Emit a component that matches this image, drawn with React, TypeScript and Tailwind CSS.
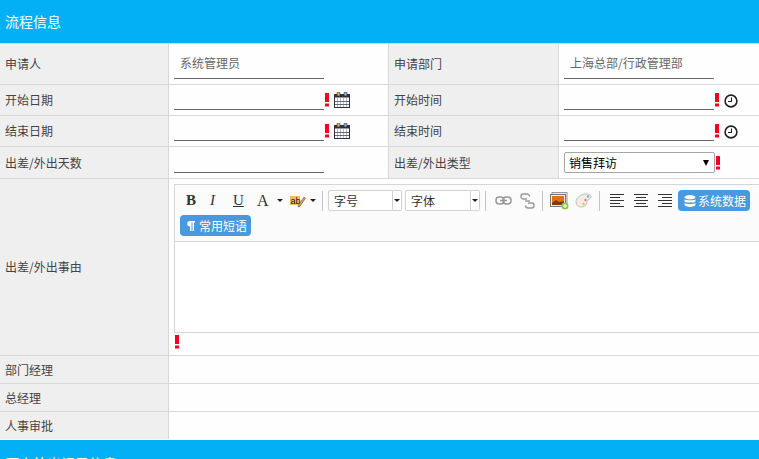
import type { ReactNode } from 'react'

const FONT = "[font-family:'Microsoft_YaHei','Noto_Sans_CJK_SC','Liberation_Sans',sans-serif]"

function Label({ children, className = '' }: { children: ReactNode; className?: string }) {
  return <div className={`flex items-center bg-[#f0efef] pl-[5px] text-[12px] text-[#444] ${className}`}>{children}</div>
}

function Bang() {
  return (
    <svg width="5" height="14" viewBox="0 0 5 14" className="block shrink-0">
      <rect x="1" y="0" width="4" height="9" fill="#f5001e" />
      <rect x="1" y="10.500" width="4" height="3" fill="#f5001e" />
    </svg>
  )
}

function Calendar() {
  return (
    <svg width="16" height="16" viewBox="0 0 16 16" className="ml-[5px] mt-[2px] shrink-0">
      <rect x="0.5" y="2.5" width="15" height="13" fill="#fff" stroke="#33303a" />
      <rect x="0.5" y="2.5" width="15" height="3" fill="#33303a" />
      <path d="M3.5 6v9M6.5 6v9M9.5 6v9M12.5 6v9" stroke="#9fc4dc" />
      <path d="M1 9.5h14M1 12.5h14" stroke="#6b6870" />
      <rect x="3" y="0" width="3" height="4" rx="1" fill="#d9a860" stroke="#33303a" strokeWidth="0.6" />
      <rect x="10" y="0" width="3" height="4" rx="1" fill="#7fb0cf" stroke="#33303a" strokeWidth="0.6" />
    </svg>
  )
}

function Clock() {
  return (
    <svg width="14" height="14" viewBox="0 0 14 14" className="ml-[5px] mt-[4px] shrink-0">
      <circle cx="7" cy="7" r="5.9" fill="#fff" stroke="#222" strokeWidth="1.6" />
      <path d="M7.5 3.5V7.5H4" fill="none" stroke="#222" strokeWidth="1.1" />
    </svg>
  )
}

function Line({ text }: { text?: string }) {
  return <div className="h-[22px] w-[150px] shrink-0 border-b border-[#666] pl-[6px] text-[12px] leading-[12px] text-[#666]">{text}</div>
}

// value cell: the underline sits 5px above the row's bottom
function Value({ children }: { children?: ReactNode }) {
  return <div className="flex items-end bg-[#fefefe] pb-[5px] pl-[5px]">{children}</div>
}

function Required({ children }: { children: ReactNode }) {
  return (
    <div className="flex items-center">
      <Line />
      <span className="mt-[2px]"><Bang /></span>
      {children}
    </div>
  )
}

function Caret({ className = '' }: { className?: string }) {
  return <span className={`h-0 w-0 border-x-[3px] border-t-[3px] border-x-transparent border-t-[#222] ${className}`} />
}

function Sep({ className = '' }: { className?: string }) {
  return <span className={`h-[20px] w-px bg-[#c4c4c4] ${className}`} />
}

function Combo({ text, className = '' }: { text: string; className?: string }) {
  return (
    <span className={`flex h-[21px] ${className}`}>
      <span className="flex w-[65px] items-center rounded-l-[2px] border border-[#d2d2d2] bg-white pl-[5px] text-[12px] text-[#333]">{text}</span>
      <span className="flex w-[9px] items-center justify-center rounded-r-[2px] border border-l-0 border-[#d2d2d2] bg-white">
        <Caret />
      </span>
    </span>
  )
}

function PillButton({ icon, text, className = '' }: { icon: ReactNode; text: string; className?: string }) {
  return (
    <span className={`flex h-[21px] items-center rounded-[4px] bg-[#4a98dd] pl-[6px] text-[12px] text-white ${className}`}>
      {icon}
      {text}
    </span>
  )
}

function AlignIcon({ type, className = '' }: { type: 'left' | 'center' | 'right'; className?: string }) {
  const short = type === 'left' ? 'M0 3.5h10M0 9.5h10' : type === 'center' ? 'M2 3.5h10M2 9.5h10' : 'M4 3.5h10M4 9.5h10'
  return (
    <svg width="14" height="13" viewBox="0 0 14 13" className={`shrink-0 ${className}`} stroke="#333" fill="none">
      <path d="M0 0.5h14M0 6.5h14M0 12.5h14" />
      <path d={short} />
    </svg>
  )
}

function Toolbar() {
  return (
    <div className="flex h-[57px] flex-col gap-[4px] border-b border-[#d5d5d5] bg-[#fbfbfb] pt-[5px] shadow-[0_1px_2px_#ddd]">
      <div className="flex h-[21px] items-center pl-[11px]">
        <span className="flex items-center text-[15px] text-[#333] [font-family:'Liberation_Serif',serif]">
          <b className="w-[23px]">B</b>
          <i className="w-[24px] pl-[1px]">I</i>
          <u className="w-[24px]">U</u>
          <span className="w-[13px] text-[16px]">A</span>
        </span>
        <Caret className="ml-[7px]" />
        <svg width="16" height="14" viewBox="0 0 16 14" className="ml-[7px]">
          <rect x="0" y="2" width="10" height="9" fill="#f1bd55" />
          <text x="0.5" y="9.5" fontSize="9" fill="#222" fontFamily="Liberation Sans">ab</text>
          <path d="M8 12 14 3l1.500 1.200-5.500 8-2 .8z" fill="#e8a33d" stroke="#555" strokeWidth="0.6" />
        </svg>
        <Caret className="ml-[4px]" />
        <Sep className="ml-[6px]" />
        <Combo text="字号" className="ml-[5px]" />
        <Combo text="字体" className="ml-[3px] [&>span:first-child]:w-[66px]" />
        <Sep className="ml-[5px]" />
        <svg width="17" height="9" viewBox="0 0 17 9" className="ml-[9px]" fill="none" stroke="#999" strokeWidth="1.5">
          <rect x="1" y="1" width="8" height="7" rx="3.2" />
          <rect x="8" y="1" width="8" height="7" rx="3.2" />
          <path d="M5 4.500h7" />
        </svg>
        <svg width="15" height="16" viewBox="0 0 15 16" className="ml-[8px]" fill="none" stroke="#999" strokeWidth="1.4">
          <path d="M7 6H3.500a2.500 2.500 0 0 1 0-5H7a2.500 2.500 0 0 1 2.500 2.500" />
          <path d="M8 10h3.500a2.500 2.500 0 0 1 0 5H8a2.500 2.500 0 0 1-2.500-2.500" />
          <path d="M5 8h5" />
        </svg>
        <Sep className="ml-[7px]" />
        <svg width="19" height="18" viewBox="0 0 19 18" className="ml-[7px]">
          <rect x="2" y="0.5" width="15" height="12" fill="#e8e8e8" stroke="#999" />
          <rect x="0.5" y="2.5" width="15" height="12" fill="#eee" stroke="#777" />
          <rect x="2" y="4" width="12" height="9" fill="#d9741c" />
          <path d="M2 11l4-3 3 2 5-1v4H2z" fill="#7a3f10" />
          <circle cx="15" cy="14" r="3.500" fill="#8fc73e" />
          <path d="M15 12v4M13 14h4" stroke="#fff" />
        </svg>
        <svg width="17" height="15" viewBox="0 0 17 15" className="ml-[6px]">
          <path d="M1 9C1 5 6 1 11 1c3 0 5 1 5 2.500 0 2.500-4 3-4 5.500 0 3-3 5-5.500 5C3.500 14 1 12 1 9z" fill="#f1ede4" stroke="#c4c0b8" />
          <circle cx="13" cy="3.500" r="1.200" fill="#6fb3e0" />
          <circle cx="10.500" cy="7" r="1.200" fill="#e07f6f" />
          <circle cx="8.500" cy="11" r="1.200" fill="#e8c04a" />
        </svg>
        <Sep className="ml-[7px]" />
        <AlignIcon type="left" className="ml-[10px]" />
        <AlignIcon type="center" className="ml-[10px]" />
        <AlignIcon type="right" className="ml-[10px]" />
        <PillButton
          className="ml-[6px] w-[72px]"
          text="系统数据"
          icon={
            <svg width="12" height="12" viewBox="0 0 12 12" fill="#fff" className="mr-[2px] shrink-0">
              <ellipse cx="6" cy="2.200" rx="5.500" ry="2.200" />
              <path d="M0.500 4.200c1 1.400 10 1.400 11 0v2.200c-1 1.600-10 1.600-11 0zM0.500 8c1 1.400 10 1.400 11 0v1.800c-1 2.800-10 2.800-11 0z" />
            </svg>
          }
        />
      </div>
      <div className="flex h-[21px] items-center pl-[5px]">
        <PillButton
          className="w-[71px]"
          text="常用短语"
          icon={
            <svg width="8" height="10" viewBox="0 0 8 10" fill="#fff" className="ml-[1px] mr-[4px] shrink-0">
              <path d="M3 0h5v1.500H7V10H5.500V1.500h-1V10H3V5.500A2.750 2.750 0 0 1 3 0z" />
            </svg>
          }
        />
      </div>
    </div>
  )
}

function Band({ title, className = '' }: { title: string; className?: string }) {
  return <div className={`flex items-center bg-[#03b0f5] pl-[5px] text-[14px] text-white ${className}`}>{title}</div>
}

export default function App() {
  return (
    <div className={`h-[459px] w-[759px] overflow-hidden bg-white ${FONT}`}>
      <Band title="流程信息" className="h-[43px]" />
      <div className="grid grid-cols-[168px_219px_169px_1fr] grid-rows-[40px_30px_30px_31px] gap-px border-y border-[#dad8d6] bg-[#dad8d6]">
        <Label>申请人</Label>
        <Value><Line text="系统管理员" /></Value>
        <Label>申请部门</Label>
        <Value><Line text="上海总部/行政管理部" /></Value>

        <Label>开始日期</Label>
        <Value><Required><Calendar /></Required></Value>
        <Label>开始时间</Label>
        <Value><Required><Clock /></Required></Value>

        <Label>结束日期</Label>
        <Value><Required><Calendar /></Required></Value>
        <Label>结束时间</Label>
        <Value><Required><Clock /></Required></Value>

        <Label>出差/外出天数</Label>
        <Value><Line /></Value>
        <Label>出差/外出类型</Label>
        <div className="flex items-center bg-[#fefefe] pl-[5px]">
          <div className="flex h-[21px] w-[151px] items-center justify-between rounded-[2px] border border-[#a6a6a6] bg-white pl-[4px] pr-[5px] text-[12px] text-black">
            销售拜访
            <span className="h-0 w-0 border-x-[3.5px] border-t-[6px] border-x-transparent border-t-black" />
          </div>
          <Bang />
        </div>
      </div>

      <div className="grid h-[177px] grid-cols-[168px_1fr] gap-x-px border-b border-[#dad8d6] bg-[#dad8d6]">
        <Label>出差/外出事由</Label>
        <div className="flex flex-col overflow-hidden bg-[#fefefe] pl-[5px] pt-[5px]">
          <div className="w-[600px] border border-[#d5d5d5]">
            <Toolbar />
            <div className="h-[90px] bg-white" />
          </div>
          <div className="mt-[2px]"><Bang /></div>
        </div>
      </div>

      <div className="grid grid-cols-[168px_1fr] grid-rows-[27px_27px_27px] gap-px bg-[#dad8d6]">
        <Label>部门经理</Label>
        <div className="bg-[#fefefe]" />
        <Label>总经理</Label>
        <div className="bg-[#fefefe]" />
        <Label>人事审批</Label>
        <div className="bg-[#fefefe]" />
      </div>

      <Band title="历史外出记录信息" className="mt-px h-[47px]" />
    </div>
  )
}
